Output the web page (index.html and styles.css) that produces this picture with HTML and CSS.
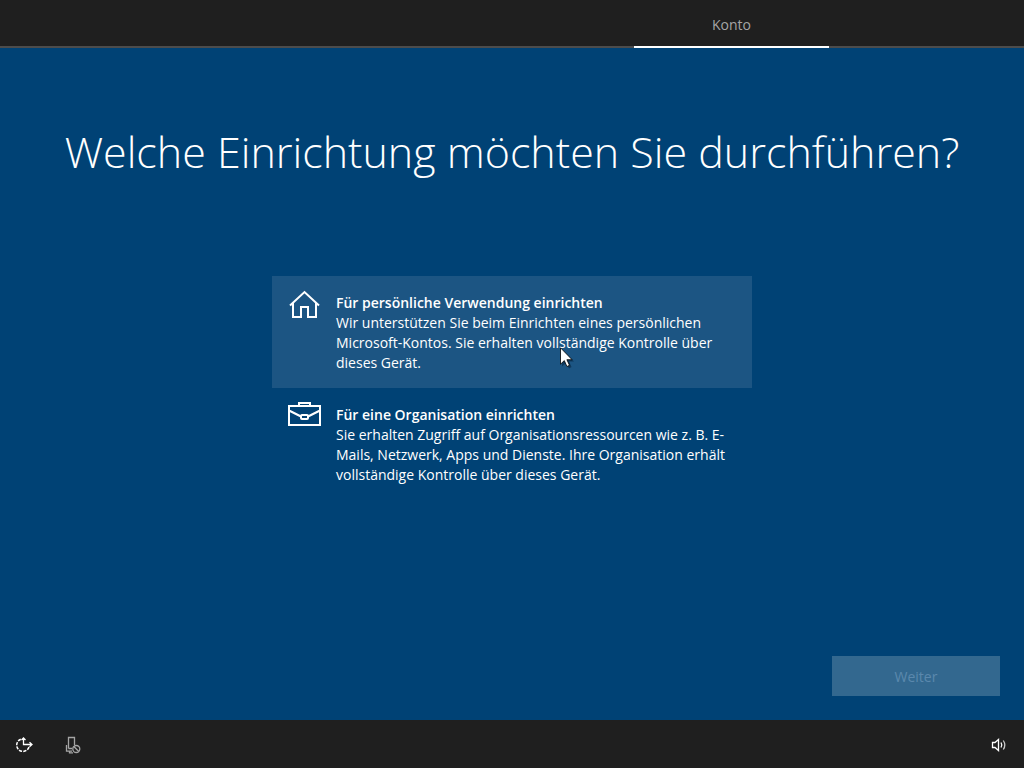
FILE: index.html
```html
<!DOCTYPE html>
<html lang="de">
<head>
<meta charset="utf-8">
<meta name="viewport" content="width=device-width, initial-scale=1">
<title>Konto</title>
<link rel="stylesheet" href="styles.css">
</head>
<body>
<header class="steps">
  <a class="step" href="#konto" aria-current="step">Konto</a>
</header>
<main class="content" id="konto">
  <h1 class="title">Welche Einrichtung möchten Sie durchführen?</h1>
  <div class="options">
    <button class="option option-hover" type="button">
      <svg class="option-icon" viewBox="0 0 34 32" aria-hidden="true">
        <path d="M2 17.500 16.500 4 31 17.500M5 15V29h8V19h7v10h8V15" fill="none" stroke="#fff" stroke-width="2"/>
      </svg>
      <span class="option-text">
        <span class="option-name">Für persönliche Verwendung einrichten</span>
        <span>Wir unterstützen Sie beim Einrichten eines persönlichen<br>Microsoft-Kontos. Sie erhalten vollständige Kontrolle über<br>dieses Gerät.</span>
      </span>
      <svg class="pointer" viewBox="0 0 14 22" aria-hidden="true">
        <path d="M2 2.5v17l4-3.5 3 5.5 2.5-1.5L9 14.5h5z" fill="#001c35" opacity=".5"/>
        <path d="M.5.8v16.4l3.8-3.6 2.6 5.9 2.6-1.2-2.6-5.6h5.2z" fill="#fff" stroke="#000" stroke-width=".8"/>
      </svg>
    </button>
    <button class="option" type="button">
      <svg class="option-icon" viewBox="0 0 34 32" aria-hidden="true">
        <path d="M1 6h31v19H1zM11 6V3h11v3M1 10.500l12 6M20 16.500l12-6" fill="none" stroke="#fff" stroke-width="2"/>
        <rect x="13" y="15" width="7" height="4" rx="1" fill="none" stroke="#fff" stroke-width="2"/>
      </svg>
      <span class="option-text">
        <span class="option-name">Für eine Organisation einrichten</span>
        <span>Sie erhalten Zugriff auf Organisationsressourcen wie z. B. E-<br>Mails, Netzwerk, Apps und Dienste. Ihre Organisation erhält<br>vollständige Kontrolle über dieses Gerät.</span>
      </span>
    </button>
  </div>
  <button class="next" type="button" disabled>Weiter</button>
</main>
<footer class="toolbar">
  <button class="tool" type="button" aria-label="Erleichterte Bedienung">
    <svg class="tool-icon" viewBox="0 0 18 18" fill="none" stroke="#fff" aria-hidden="true">
      <path d="M14 11A6.3 6.3 0 1 1 6.5 3" stroke-width="1.5" stroke-dasharray="3.2 1.2"/>
      <path d="M8.500 2v6.500H17M6.500 4l2-2 2 2M14.500 6.200 17 8.500l-2.500 2.300" stroke-width="1.300"/>
    </svg>
  </button>
  <button class="tool" type="button" aria-label="Mikrofon aus">
    <svg class="tool-icon" viewBox="0 0 18 18" fill="none" stroke="#a5a5a5" stroke-width="1.300" aria-hidden="true">
      <path d="M5.500 12.500v-11h6V9M5.500 12.500H9M3.500 9v6.200H9M6.500 15.200v1.600H10"/>
      <circle cx="13.300" cy="13" r="3.500"/>
      <path d="m10.800 10.500 5 5"/>
    </svg>
  </button>
  <button class="tool tool-end" type="button" aria-label="Lautstärke">
    <svg class="tool-icon" viewBox="0 0 18 18" fill="none" stroke="#fff" stroke-width="1.300" aria-hidden="true">
      <path d="M1.500 6.500H4l3.500-3v11L4 11.500H1.500z"/>
      <path d="M10 6.500q1.600 2.500 0 5"/>
      <path d="M12.300 4.500q3 4.500 0 9" stroke="#c8c8c8"/>
    </svg>
  </button>
</footer>
</body>
</html>
```
FILE: styles.css
```css
* {
  box-sizing: border-box;
}

body {
  margin: 0;
  min-height: 100vh;
  display: flex;
  flex-direction: column;
  background: #004275;
  color: #fff;
  font-family: "Segoe UI", "Open Sans", "Noto Sans", sans-serif;
  font-size: 14px;
  line-height: 20px;
}

button {
  border: 0;
  background: none;
  color: inherit;
  font: inherit;
}

.steps {
  display: grid;
  grid-template-columns: 634fr 195fr 195fr;
  height: 48px;
  background: #1f1f1f;
  box-shadow: inset 0 -2px #4c4c4c;
}

.step {
  grid-column: 2;
  padding-top: 15px;
  border-bottom: 2px solid #fff;
  color: #a5a5a5;
  text-align: center;
  text-decoration: none;
}

.content {
  flex: 1;
  display: flex;
  flex-direction: column;
  align-items: center;
  padding: 72px 24px 24px;
}

.title {
  margin: 0;
  font-size: 43px;
  font-weight: 300;
  line-height: 64px;
  text-align: center;
}

.options {
  width: 100%;
  max-width: 480px;
  margin-top: 92px;
}

.option {
  position: relative;
  display: flex;
  gap: 14px;
  width: 100%;
  padding: 12px 16px 15px;
  text-align: left;
}

.option-hover {
  background: #1c5583;
}

.option-icon {
  flex: none;
  width: 34px;
  height: 32px;
}

.option-text {
  flex: 1;
  padding-top: 5px;
  white-space: nowrap;
}

.option-name {
  display: block;
  font-weight: 600;
}

.pointer {
  position: absolute;
  left: 288px;
  top: 71px;
  width: 14px;
  height: 22px;
}

.next {
  align-self: flex-end;
  width: 168px;
  height: 40px;
  margin-top: auto;
  padding-top: 2px;
  background: #33688f;
  color: #5b88ad;
}

.toolbar {
  display: flex;
  align-items: center;
  height: 48px;
  padding-top: 2px;
  background: #1f1f1f;
}

.tool {
  display: grid;
  place-items: center;
  width: 48px;
  height: 46px;
  padding: 0;
}

.tool-end {
  margin-left: auto;
}

.tool-icon {
  width: 18px;
  height: 18px;
}
```
